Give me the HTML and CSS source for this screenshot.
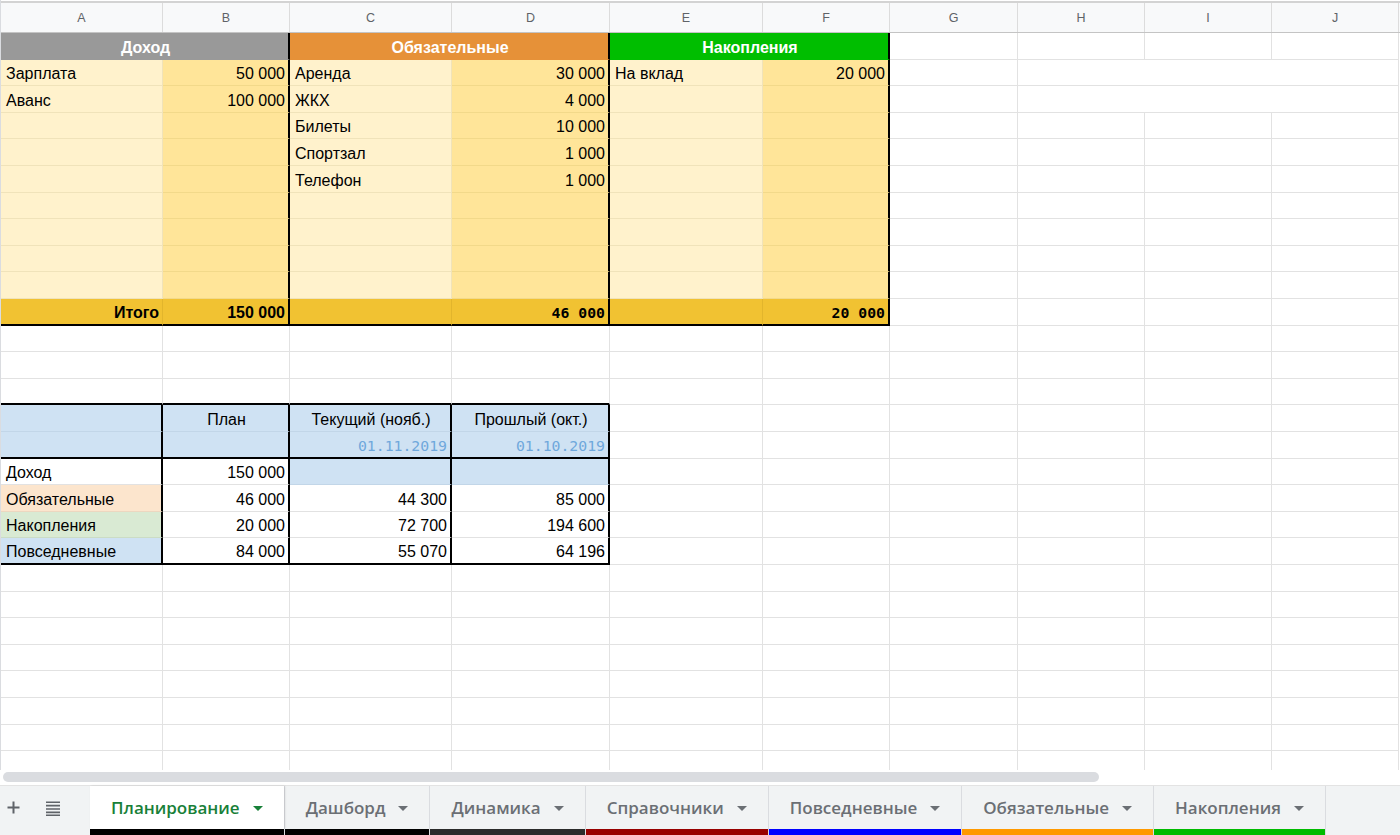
FILE: index.html
```html
<!DOCTYPE html>
<html lang="ru">
<head>
<meta charset="utf-8">
<title>Планирование</title>
<link rel="stylesheet" href="styles.css">
</head>
<body>
<div class="app">
  <div class="sheet">
    <div class="cols">
      <div>A</div><div>B</div><div>C</div><div>D</div><div>E</div><div>F</div><div>G</div><div>H</div><div>I</div><div>J</div>
    </div>
    <div class="grid">
      <!-- row 1 -->
      <div class="c hd gray s2 br">Доход</div>
      <div class="c hd orange s2 br">Обязательные</div>
      <div class="c hd green s2 br">Накопления</div>
      <div class="c"></div><div class="c"></div><div class="c"></div><div class="c"></div>
      <!-- row 2 -->
      <div class="c y1">Зарплата</div><div class="c y2 r br">50 000</div>
      <div class="c y1">Аренда</div><div class="c y2 r br">30 000</div>
      <div class="c y1">На вклад</div><div class="c y2 r br">20 000</div>
      <div class="c"></div><div class="c s3"></div>
      <!-- row 3 -->
      <div class="c y1">Аванс</div><div class="c y2 r br">100 000</div>
      <div class="c y1">ЖКХ</div><div class="c y2 r br">4 000</div>
      <div class="c y1"></div><div class="c y2 br"></div>
      <div class="c"></div><div class="c s3"></div>
      <!-- row 4 -->
      <div class="c y1"></div><div class="c y2 br"></div>
      <div class="c y1">Билеты</div><div class="c y2 r br">10 000</div>
      <div class="c y1"></div><div class="c y2 br"></div>
      <div class="c"></div><div class="c"></div><div class="c"></div><div class="c"></div>
      <!-- row 5 -->
      <div class="c y1"></div><div class="c y2 br"></div>
      <div class="c y1">Спортзал</div><div class="c y2 r br">1 000</div>
      <div class="c y1"></div><div class="c y2 br"></div>
      <div class="c"></div><div class="c"></div><div class="c"></div><div class="c"></div>
      <!-- row 6 -->
      <div class="c y1"></div><div class="c y2 br"></div>
      <div class="c y1">Телефон</div><div class="c y2 r br">1 000</div>
      <div class="c y1"></div><div class="c y2 br"></div>
      <div class="c"></div><div class="c"></div><div class="c"></div><div class="c"></div>
      <!-- row 7 -->
      <div class="c y1"></div><div class="c y2 br"></div>
      <div class="c y1"></div><div class="c y2 br"></div>
      <div class="c y1"></div><div class="c y2 br"></div>
      <div class="c"></div><div class="c"></div><div class="c"></div><div class="c"></div>
      <!-- row 8 -->
      <div class="c y1"></div><div class="c y2 br"></div>
      <div class="c y1"></div><div class="c y2 br"></div>
      <div class="c y1"></div><div class="c y2 br"></div>
      <div class="c"></div><div class="c"></div><div class="c"></div><div class="c"></div>
      <!-- row 9 -->
      <div class="c y1"></div><div class="c y2 br"></div>
      <div class="c y1"></div><div class="c y2 br"></div>
      <div class="c y1"></div><div class="c y2 br"></div>
      <div class="c"></div><div class="c"></div><div class="c"></div><div class="c"></div>
      <!-- row 10 -->
      <div class="c y1"></div><div class="c y2 br"></div>
      <div class="c y1"></div><div class="c y2 br"></div>
      <div class="c y1"></div><div class="c y2 br"></div>
      <div class="c"></div><div class="c"></div><div class="c"></div><div class="c"></div>
      <!-- row 11 -->
      <div class="c tot r b bb">Итого</div><div class="c tot r b bb br">150 000</div>
      <div class="c tot bb"></div><div class="c tot r b mono bb br">46 000</div>
      <div class="c tot bb"></div><div class="c tot r b mono bb br">20 000</div>
      <div class="c"></div><div class="c"></div><div class="c"></div><div class="c"></div>
      <!-- row 12 -->
      <div class="c"></div><div class="c"></div><div class="c"></div><div class="c"></div><div class="c"></div>
      <div class="c"></div><div class="c"></div><div class="c"></div><div class="c"></div><div class="c"></div>
      <!-- row 13 -->
      <div class="c"></div><div class="c"></div><div class="c"></div><div class="c"></div><div class="c"></div>
      <div class="c"></div><div class="c"></div><div class="c"></div><div class="c"></div><div class="c"></div>
      <!-- row 14 -->
      <div class="c bb"></div><div class="c bb"></div><div class="c bb"></div><div class="c bb"></div><div class="c"></div>
      <div class="c"></div><div class="c"></div><div class="c"></div><div class="c"></div><div class="c"></div>
      <!-- row 15 -->
      <div class="c blue br"></div><div class="c blue m br">План</div>
      <div class="c blue m br">Текущий (нояб.)</div><div class="c blue m br">Прошлый (окт.)</div>
      <div class="c"></div><div class="c"></div><div class="c"></div><div class="c"></div><div class="c"></div><div class="c"></div>
      <!-- row 16 -->
      <div class="c blue br bb"></div><div class="c blue br bb"></div>
      <div class="c blue r mono date br bb">01.11.2019</div><div class="c blue r mono date br bb">01.10.2019</div>
      <div class="c"></div><div class="c"></div><div class="c"></div><div class="c"></div><div class="c"></div><div class="c"></div>
      <!-- row 17 -->
      <div class="c br">Доход</div><div class="c r br">150 000</div>
      <div class="c blue br"></div><div class="c blue br"></div>
      <div class="c"></div><div class="c"></div><div class="c"></div><div class="c"></div><div class="c"></div><div class="c"></div>
      <!-- row 18 -->
      <div class="c peach br">Обязательные</div><div class="c r br">46 000</div>
      <div class="c r br">44 300</div><div class="c r br">85 000</div>
      <div class="c"></div><div class="c"></div><div class="c"></div><div class="c"></div><div class="c"></div><div class="c"></div>
      <!-- row 19 -->
      <div class="c mint br">Накопления</div><div class="c r br">20 000</div>
      <div class="c r br">72 700</div><div class="c r br">194 600</div>
      <div class="c"></div><div class="c"></div><div class="c"></div><div class="c"></div><div class="c"></div><div class="c"></div>
      <!-- row 20 -->
      <div class="c blue br bb">Повседневные</div><div class="c r br bb">84 000</div>
      <div class="c r br bb">55 070</div><div class="c r br bb">64 196</div>
      <div class="c"></div><div class="c"></div><div class="c"></div><div class="c"></div><div class="c"></div><div class="c"></div>
    </div>
    <div class="filler">
      <div></div><div></div><div></div><div></div><div></div><div></div><div></div><div></div><div></div><div></div>
    </div>
  </div>
  <div class="hscroll"><div class="thumb"></div></div>
  <div class="tabbar">
    <div class="tools">
      <svg class="ico-plus" width="13" height="13" viewBox="0 0 13 13"><path d="M6.5 0.5v12M0.5 6.5h12" stroke="#5f6368" stroke-width="2" fill="none"/></svg>
      <svg class="ico-list" width="16" height="15" viewBox="0 0 16 15"><path d="M1 1.2h14M1 4.6h14M1 8h14M1 11.4h14M1 14.2h14" stroke="#5f6368" stroke-width="1.6" fill="none"/></svg>
    </div>
    <div class="tab active"><div class="tab-main">Планирование<span class="caret"></span></div><div class="strip s-black"></div></div>
    <div class="tab"><div class="tab-main">Дашборд<span class="caret"></span></div><div class="strip s-black"></div></div>
    <div class="tab"><div class="tab-main">Динамика<span class="caret"></span></div><div class="strip s-dark"></div></div>
    <div class="tab"><div class="tab-main">Справочники<span class="caret"></span></div><div class="strip s-red"></div></div>
    <div class="tab"><div class="tab-main">Повседневные<span class="caret"></span></div><div class="strip s-blue"></div></div>
    <div class="tab"><div class="tab-main">Обязательные<span class="caret"></span></div><div class="strip s-orange"></div></div>
    <div class="tab"><div class="tab-main">Накопления<span class="caret"></span></div><div class="strip s-green"></div></div>
  </div>
</div>
</body>
</html>
```

FILE: styles.css
```css
* { box-sizing: border-box; }
html, body { margin: 0; padding: 0; background: #fff; }
body { font-family: "Liberation Sans", Arial, sans-serif; color: #000; }

.app { width: 1400px; height: 835px; display: flex; flex-direction: column; overflow: hidden; }

.sheet { height: 770px; overflow: hidden; border-left: 1px solid #dadce0; }

.cols {
  margin-top: 1px;
  height: 32px;
  display: grid;
  grid-template-columns: 162px 127px 162px 158px 153px 127px 128px 127px 127px 127px;
  background: #f8f9fa;
  border-top: 2px solid #d3d3d3;
  border-bottom: 1px solid #c4c4c4;
}
.cols div {
  border-right: 1px solid #dcdcdc;
  display: flex; align-items: center; justify-content: center;
  font-size: 12.5px; color: #5f6368;
}

.grid {
  display: grid;
  grid-template-columns: 162px 127px 162px 158px 153px 127px 128px 127px 127px 127px;
  grid-auto-rows: 26.6px;
}
.c {
  border-right: 1px solid #e2e2e2;
  border-bottom: 1px solid #e2e2e2;
  display: flex; align-items: flex-end;
  padding: 0 3px 2px 5px;
  font-size: 16px; line-height: 18px;
  white-space: nowrap; overflow: hidden;
}
.s2 { grid-column: span 2; }
.s3 { grid-column: span 3; }
.r { justify-content: flex-end; }
.m { justify-content: center; }
.b { font-weight: 700; }
.mono { font-family: "DejaVu Sans Mono", Menlo, monospace; font-size: 14.8px; }
.date { color: #6fa8dc; }

.hd { color: #fff; font-weight: 700; justify-content: center; }
.gray { background: #999999; border-bottom-color: #999999; }
.orange { background: #e69138; border-bottom-color: #e69138; }
.green { background: #00be00; border-bottom-color: #00be00; }

.y1 { background: #fff2cc; border-color: #f0e3ba; }
.y2 { background: #ffe599; border-color: #f2d98a; }
.tot { background: #f1c232; border-color: #e2b52c; }
.blue { background: #cfe2f3; border-color: #c2d6e8; }
.peach { background: #fce5cd; border-color: #ecd7c0; }
.mint { background: #d9ead3; border-color: #cbdcc5; }

.br { border-right: 2px solid #000; }
.bb { border-bottom: 2px solid #000; }

.filler {
  height: 206px;
  display: grid;
  grid-template-columns: 162px 127px 162px 158px 153px 127px 128px 127px 127px 127px;
}
.filler div {
  border-right: 1px solid #e2e2e2;
  background-image: repeating-linear-gradient(to bottom, transparent 0, transparent 25.6px, #e2e2e2 25.6px, #e2e2e2 26.6px);
}

.hscroll { height: 15px; background: #fff; padding: 2px 0 0 3px; }
.thumb { width: 1096px; height: 10px; border-radius: 5px; background: #dadce0; }

.tabbar {
  height: 50px;
  display: flex;
  background: #f1f3f4;
  border-top: 1px solid #e3e3e3;
  font-family: "Open Sans", Roboto, sans-serif;
}
.tools { width: 90px; display: flex; align-items: center; padding: 0 0 6px 7px; gap: 25px; }
.ico-list { margin-top: 1px; }

.tab { display: flex; flex-direction: column; border-right: 1px solid #dadce0; }
.tab-main {
  height: 43px;
  display: flex; align-items: center;
  padding: 0 21px 0 21px;
  font-size: 17px; font-weight: 600; color: #6b6f74;
  white-space: nowrap;
}
.caret {
  width: 0; height: 0; margin-left: 13px; margin-top: 1px;
  border-left: 5px solid transparent; border-right: 5px solid transparent;
  border-top: 5px solid currentColor;
}
.tab.active .tab-main { background: #fff; color: #188038; box-shadow: 1px 0 2px rgba(0,0,0,0.12); }
.strip { height: 6px; }
.s-black { background: #000; }
.s-dark { background: #2b2b2b; }
.s-red { background: #980000; }
.s-blue { background: #0000ff; }
.s-orange { background: #ff9900; }
.s-green { background: #00bb00; }
```
